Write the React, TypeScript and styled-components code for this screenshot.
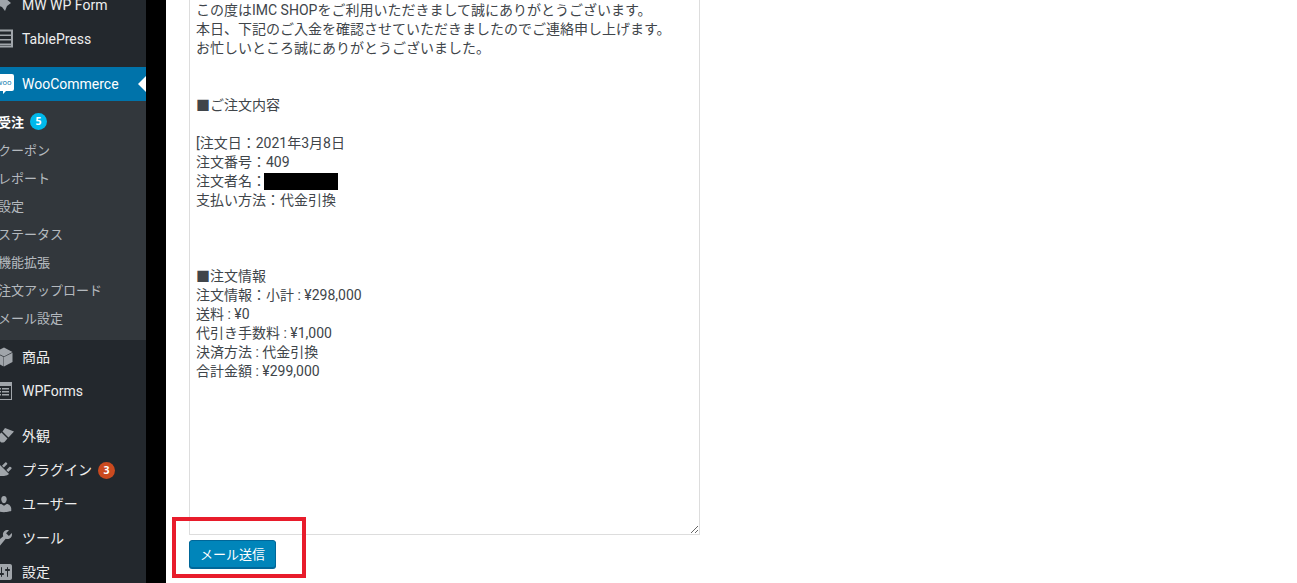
import React from "react";
import styled, { createGlobalStyle } from "styled-components";

const Global = createGlobalStyle`
  html, body { margin: 0; padding: 0; height: 583px; overflow: hidden; background: #fff; }
  #root { height: 583px; }
`;

const FONT = `Roboto, "Noto Sans CJK JP", "Noto Sans", sans-serif`;

const Page = styled.div`
  display: flex;
  width: 1297px;
  height: 583px;
  overflow: hidden;
  font-family: ${FONT};
`;
const Sidebar = styled.nav`
  flex: 0 0 146px;
  height: 583px;
  overflow: hidden;
  background: #23282d;
`;
const Menu = styled.div`
  width: 160px;
  margin: -12px 0 0 -14px;
  display: flex;
  flex-direction: column;
`;
const Item = styled.div<{ $active?: boolean; $gapAfter?: boolean }>`
  position: relative;
  height: 34px;
  flex: 0 0 34px;
  display: flex;
  align-items: center;
  background: ${(p) => (p.$active ? "#0073aa" : "transparent")};
  color: ${(p) => (p.$active ? "#fff" : "#eee")};
  font-size: 14px;
  margin-bottom: ${(p) => (p.$gapAfter ? "11px" : "0")};
`;
const Label = styled.span<{ $cjk?: boolean }>`
  margin-top: ${(p) => (p.$cjk ? "-2px" : "0")};
`;
const IconBox = styled.span`
  flex: 0 0 36px;
  height: 34px;
  display: flex;
  align-items: center;
  justify-content: center;
  color: #a0a5aa;
`;
const Arrow = styled.span`
  position: absolute;
  right: 0;
  top: 9px;
  width: 0;
  height: 0;
  border: 8px solid transparent;
  border-right-color: #fff;
  border-left-width: 0;
`;
const Sub = styled.div`
  background: #32373c;
  padding: 6px 0 9px;
  display: flex;
  flex-direction: column;
`;
const SubItem = styled.div<{ $current?: boolean }>`
  height: 28px;
  display: flex;
  align-items: center;
  gap: 6px;
  padding-left: 12px;
  font-size: 13px;
  color: ${(p) => (p.$current ? "#fff" : "rgba(240,245,250,.7)")};
  font-weight: ${(p) => (p.$current ? 600 : 400)};
`;
const Badge = styled.span<{ $bg: string; $spaced?: boolean }>`
  display: inline-flex;
  width: 17px;
  height: 17px;
  margin-left: ${(p) => (p.$spaced ? "6px" : "0")};
  border-radius: 50%;
  align-items: center;
  justify-content: center;
  background: ${(p) => p.$bg};
  color: #fff;
  font-family: "Open Sans", sans-serif;
  font-size: 10.5px;
  font-weight: 700;
`;
const Gutter = styled.div`
  flex: 0 0 20px;
  background: #000;
`;
const Main = styled.main`
  position: relative;
  flex: 1;
  background: #fff;
  padding-left: 23px;
`;
const Letter = styled.textarea`
  display: block;
  box-sizing: border-box;
  width: 511px;
  height: 543px;
  margin-top: -8px;
  padding: 8px 6px;
  border: 1px solid #ddd;
  outline: none;
  background: #fff;
  color: #40454a;
  font-family: ${FONT};
  font-size: 14px;
  line-height: 19px;
  overflow: hidden;
  resize: both;
`;
const Redaction = styled.div`
  position: absolute;
  left: 98px;
  top: 173px;
  width: 74px;
  height: 17px;
  background: #000;
`;
const SendButton = styled.button`
  display: block;
  box-sizing: border-box;
  width: 87px;
  height: 28px;
  margin-top: 5px;
  padding: 0 0 2px;
  background: #0085ba;
  border: 1px solid #006799;
  border-radius: 3px;
  box-shadow: 0 1px 0 #006799;
  color: #fff;
  font-family: ${FONT};
  font-size: 13px;
`;
const Highlight = styled.div`
  position: absolute;
  left: 6px;
  top: 517px;
  width: 134px;
  height: 61px;
  box-sizing: border-box;
  border: 4px solid #e81c2b;
  pointer-events: none;
`;

const S = (p: React.PropsWithChildren) => (
  <svg width="20" height="20" viewBox="0 0 20 20" fill="currentColor">{p.children}</svg>
);

const text = `この度はIMC SHOPをご利用いただきまして誠にありがとうございます。
本日、下記のご入金を確認させていただきましたのでご連絡申し上げます。
お忙しいところ誠にありがとうございました。


■ご注文内容

[注文日：2021年3月8日
注文番号：409
注文者名：
支払い方法：代金引換



■注文情報
注文情報：小計 : ¥298,000
送料 : ¥0
代引き手数料 : ¥1,000
決済方法 : 代金引換
合計金額 : ¥299,000`;

export default function App() {
  return (
    <Page lang="ja">
      <Global />
      <Sidebar>
        <Menu>
          <Item>
            <IconBox><S><path d="M3 2l5 3 3-2 6 5-4 3-2 5-3-4-5-2 1-4z" /></S></IconBox>
            <Label>MW WP Form</Label>
          </Item>
          <Item $gapAfter>
            <IconBox><S><path fillRule="evenodd" d="M1 0.500h18v18H1zM3 2.500v3h14v-3zm0 4.500v3h14V7zm0 4.500v3h14v-3zm0 4.500v.500h14V16z" /></S></IconBox>
            <Label>TablePress</Label>
          </Item>
          <Item $active>
            <IconBox>
              <svg width="20" height="20" viewBox="0 0 20 20">
                <path fill="#fff" d="M2 0h16a2 2 0 0 1 2 2v13a2 2 0 0 1-2 2h-6l-3 3v-3H2a2 2 0 0 1-2-2V2a2 2 0 0 1 2-2z" />
                <text x="10" y="11" fontSize="7.500" textAnchor="middle" fill="#0073aa" fontFamily="Open Sans">woo</text>
              </svg>
            </IconBox>
            <Label>WooCommerce</Label>
            <Arrow />
          </Item>
          <Sub>
            <SubItem $current>受注<Badge $bg="#00b9eb">5</Badge></SubItem>
            <SubItem>クーポン</SubItem>
            <SubItem>レポート</SubItem>
            <SubItem>設定</SubItem>
            <SubItem>ステータス</SubItem>
            <SubItem>機能拡張</SubItem>
            <SubItem>注文アップロード</SubItem>
            <SubItem>メール設定</SubItem>
          </Sub>
          <Item>
            <IconBox><S><path d="M10 .500l8.500 4.500-8.500 4.500L1.500 5zM1.500 5.800l8.100 4.300v9.400l-8.100-4.500zM18.500 5.800v9.200l-8.500 4.500v-9.400z" /></S></IconBox>
            <Label $cjk>商品</Label>
          </Item>
          <Item $gapAfter>
            <IconBox><S><path fillRule="evenodd" d="M2 1h16v18H2zM3 5v13h14V5zM5 7h2v1.500H5zm3 0h7v1.500H8zm-3 3h2v1.500H5zm3 0h7v1.500H8zm-3 3h2v1.500H5zm3 0h7v1.500H8z" /></S></IconBox>
            <Label>WPForms</Label>
          </Item>
          <Item>
            <IconBox><S><path d="M11 2l9 3.500-5.500 6L8.500 5.500zM7.500 6.500l6 6-3 3.500c-2 1-3 .500-4 0L5 13l-2-2.500z" /></S></IconBox>
            <Label $cjk>外観</Label>
          </Item>
          <Item>
            <IconBox><S><path d="M13.110 4.360L9.870 7.600 8 5.730l3.240-3.240c.350-.340 1.050-.200 1.540.300.500.490.660 1.190.330 1.570zm-8 1.770l.910-1.120 9.010 9.010-1.190.840c-.710.710-2.630 1.160-3.820 1.160H6.140L4.900 17.260c-.590.590-1.540.590-2.120 0-.590-.580-.590-1.530 0-2.120l1.240-1.240v-3.880c0-1.130.460-3.050 1.090-3.890zm7.260 3.970l3.240-3.240c.340-.350 1.050-.200 1.540.300.500.490.660 1.190.300 1.540l-3.240 3.240z" /></S></IconBox>
            <Label $cjk>プラグイン</Label><Badge $bg="#ca4a1f" $spaced>3</Badge>
          </Item>
          <Item>
            <IconBox><S><path d="M10 9.250c-2.270 0-2.730-3.440-2.730-3.440C7 4.020 7.820 2 9.970 2c2.160 0 2.980 2.020 2.710 3.810 0 0-.410 3.440-2.680 3.440zm0 2.570L12.720 10c2.390 0 4.520 2.330 4.520 4.530v2.490s-3.650 1.130-7.240 1.130c-3.650 0-7.240-1.130-7.240-1.130v-2.490c0-2.250 1.940-4.480 4.470-4.480z" /></S></IconBox>
            <Label $cjk>ユーザー</Label>
          </Item>
          <Item>
            <IconBox><S><path d="M16.680 9.770c-1.340 1.340-3.300 1.670-4.950.990l-5.410 6.520c-.990.990-2.590.990-3.570 0-.990-.980-.990-2.580 0-3.570l6.520-5.420c-.680-1.650-.350-3.610.990-4.950 1.280-1.280 3.120-1.620 4.720-1.060l-2.890 2.890 2.820 2.820 2.860-2.870c.530 1.580.180 3.390-1.090 4.660z" /></S></IconBox>
            <Label $cjk>ツール</Label>
          </Item>
          <Item>
            <IconBox><S><path d="M18 16V4c0-1.100-.900-2-2-2H4c-1.100 0-2 .900-2 2v12c0 1.100.900 2 2 2h12c1.100 0 2-.900 2-2zM8 11h1c.550 0 1 .450 1 1s-.450 1-1 1H8v1.500c0 .280-.220.500-.500.500s-.500-.220-.500-.500V13H6c-.550 0-1-.450-1-1s.450-1 1-1h1V5.500c0-.280.220-.500.500-.500s.500.220.500.500V11zm5-2h-1c-.550 0-1-.450-1-1s.450-1 1-1h1V5.500c0-.280.220-.500.500-.500s.500.220.500.500V7h1c.550 0 1 .450 1 1s-.450 1-1 1h-1v5.500c0 .280-.220.500-.500.500s-.500-.220-.500-.500V9z" /></S></IconBox>
            <Label $cjk>設定</Label>
          </Item>
        </Menu>
      </Sidebar>
      <Gutter />
      <Main>
        <Letter readOnly defaultValue={text} />
        <Redaction />
        <SendButton>メール送信</SendButton>
        <Highlight />
      </Main>
    </Page>
  );
}
